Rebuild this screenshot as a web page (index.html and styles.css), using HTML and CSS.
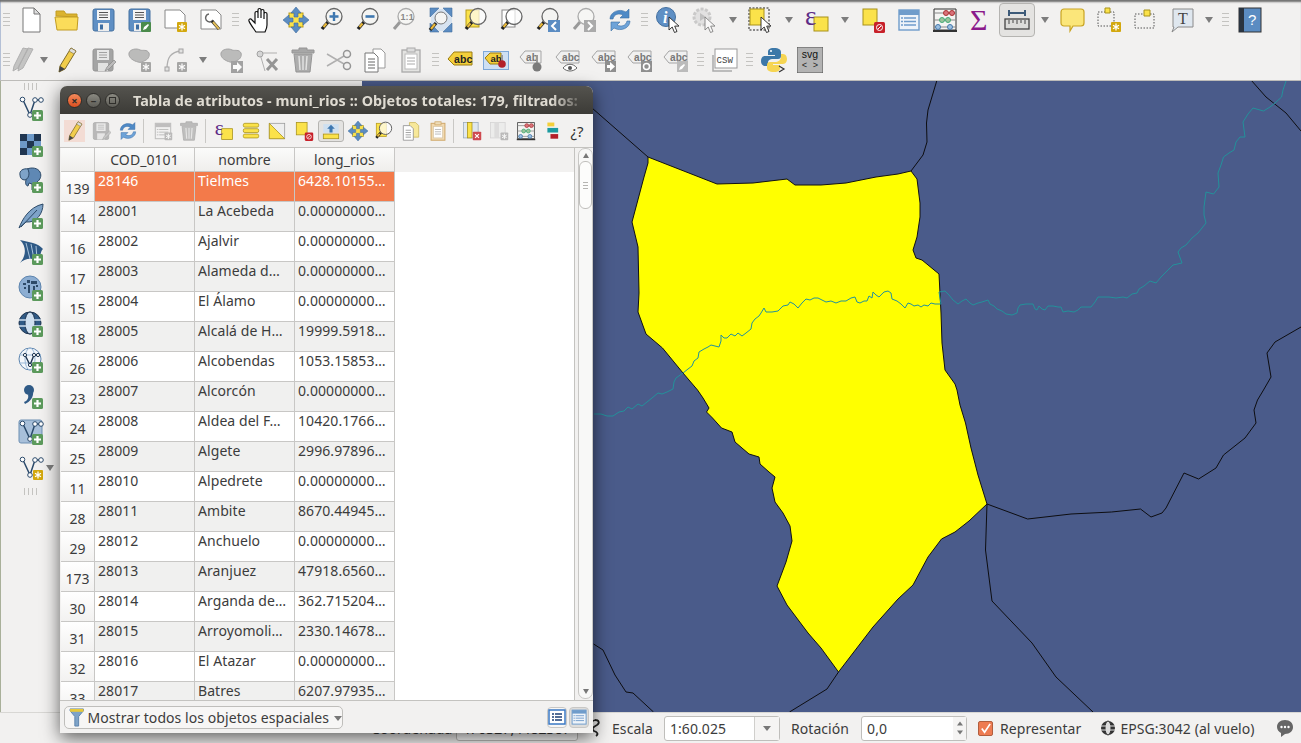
FILE: index.html
```html
<!DOCTYPE html>
<html lang="es">
<head>
    <meta charset="UTF-8">
    <title>QGIS - Tabla de atributos</title>
    <link rel="stylesheet" href="styles.css">
</head>
<body>
<svg class="sprite" xmlns="http://www.w3.org/2000/svg">
    <defs>
        <!-- piezas -->
        <g id="glass"><path d="M9 15L3 22" stroke="#222" stroke-width="3.4"/><path d="M7.500 16.500L4.500 20" stroke="#e9b93a" stroke-width="2.2"/><circle cx="15" cy="9.500" r="8" fill="#f4f4f2" stroke="#666" stroke-width="1.300"/></g>
        <g id="glass-off"><path d="M9 15L3 22" stroke="#999" stroke-width="3"/><circle cx="15" cy="9.500" r="8" fill="#f6f6f4" stroke="#aaa" stroke-width="1.300"/></g>
        <g id="plus"><rect x="14" y="15" width="11" height="11" rx="1.500" fill="#5c9a5c"/><path d="M19.500 17v7M16 20.500h7" stroke="#fff" stroke-width="2.200"/></g>
        <g id="star"><rect x="15" y="15" width="10" height="10" rx="1" fill="#d3a80e"/><path d="M20 16.500v7M17 18.200l6 3.600M23 18.200l-6 3.600" stroke="#fff" stroke-width="1.300"/></g>
        <g id="star-off"><rect x="15" y="15" width="10" height="10" rx="1" fill="#8d8d8d"/><path d="M20 16.500v7M17 18.200l6 3.600M23 18.200l-6 3.600" stroke="#fff" stroke-width="1.300"/></g>
        <g id="cursor"><path d="M0 0v13l3.200-3 2.300 5.500 2.500-1-2.300-5.400H10z" fill="#fff" stroke="#222" stroke-width=".9"/></g>
        <g id="vee"><path d="M5 5l7 15 5-15h5" fill="none" stroke="#2b4a6b" stroke-width="1.500"/><circle cx="4.500" cy="4.500" r="2.300" fill="#fff" stroke="#2b4a6b"/><circle cx="12" cy="20" r="2.300" fill="#fff" stroke="#2b4a6b"/><circle cx="17" cy="5" r="2.300" fill="#fff" stroke="#2b4a6b"/><circle cx="23" cy="5" r="2.300" fill="#fff" stroke="#2b4a6b"/></g>
        <g id="globe"><circle cx="12" cy="12" r="11" fill="#8daed2" stroke="#5d84ad"/></g>
        <g id="floppy"><rect x="3" y="2" width="21" height="22" rx="2" fill="#5f8fc4" stroke="#44709f"/><rect x="7" y="3" width="13" height="10" fill="#f4f4f4"/><path d="M9 5.500h9M9 8h9M9 10.500h9" stroke="#555"/><rect x="8" y="16" width="11" height="8" fill="#eee"/><rect x="10" y="17.500" width="3" height="5" fill="#3d6da3"/></g>
        <g id="floppy-grey"><rect x="3" y="2" width="20" height="22" rx="2" fill="#8b8b8b" stroke="#777"/><rect x="7" y="3" width="12" height="10" fill="#e4e4e4"/><path d="M9 5.500h8M9 8h8M9 10.500h8" stroke="#888"/><rect x="8" y="16" width="10" height="8" fill="#ddd"/><path d="M15 24l2-4 7-7 2 2-7 7z" fill="#aaa" stroke="#666" stroke-width=".7"/></g>
        <g id="blob"><path d="M3 6c1-4 8-5 11-3 3 1 7-1 9 3 1 3-1 6-3 7-4 2-5 3-8 2-4-1-10-4-9-9z" fill="#a9a9a9" stroke="#8a8a8a"/></g>
        <g id="tag-yellow"><path d="M1 12l6-7h18v13H7z" fill="#f3cf3a" stroke="#9b7d12"/><text x="7" y="16" class="ic-text" font-size="10.500" fill="#222" font-weight="700">abc</text></g>
        <g id="tag-grey"><path d="M1 10l5-6h18v12H6z" fill="#f0f0f0" stroke="#a5a5a5"/><text x="7" y="14" class="ic-text" font-size="10" fill="#777" font-weight="700">abc</text></g>
        <g id="tag-ab"><path d="M1 10l5-6h16v12H6z" fill="#f0f0f0" stroke="#a5a5a5"/><text x="7" y="14" class="ic-text" font-size="10" fill="#777" font-weight="700">ab</text></g>

        <!-- barra superior -->
        <g id="new"><path d="M5 1h11l6 6v18H5z" fill="#fff" stroke="#777"/><path d="M16 1v6h6z" fill="#ddd" stroke="#777"/></g>
        <g id="open"><path d="M2 9V4h8l2 3h11v3z" fill="#dbb32f" stroke="#c29c22"/><path d="M1 10h23l-1 13H3z" fill="#fbdc5a" stroke="#c29c22"/></g>
        <g id="save"><use href="#floppy"/></g>
        <g id="saveas"><use href="#floppy"/><rect x="15" y="15" width="10" height="10" rx="1" fill="#4b8b4b"/><path d="M17 23l1-3 4-3 1 1-3 4z" fill="#fff"/></g>
        <g id="newlayout"><path d="M3 3h15l5 5v13H3z" fill="#fff" stroke="#888"/><use href="#star"/></g>
        <g id="mgr"><path d="M3 3h15l5 5v14H3z" fill="#fff" stroke="#888"/><path d="M11 7a4 4 0 1 0 4 6" fill="none" stroke="#666" stroke-width="1.500"/><path d="M14 14l7 8" stroke="#222" stroke-width="3"/><path d="M15 15l6 7" stroke="#e2bd59" stroke-width="2"/></g>
        <g id="pan"><path d="M9 25c-2-3-6-8-7-11-.500-2 1.500-3 3-1l3 3V6c0-2 3-2 3 0v5V3c0-2 3-2 3 0v8V4c0-2 3-2 3 0v8-5c0-2 3-2 3 0v11c0 3-1 5-2 7z" fill="#fff" stroke="#111" stroke-width="1.200"/></g>
        <g id="pansel"><rect x="6" y="6" width="14" height="14" fill="#fbe24a" stroke="#b79b1a"/><path d="M13 0l5 6h-3v4h-4V6H8zM13 26l5-6h-3v-4h-4v4H8zM0 13l6-5v3h4v4H6v3zM26 13l-6-5v3h-4v4h4v3z" fill="#5b8cc2" stroke="#3f6c9e" stroke-width=".6"/></g>
        <g id="zoomin"><use href="#glass"/><path d="M15 5v9M10.500 9.500h9" stroke="#3f78b0" stroke-width="2.400"/></g>
        <g id="zoomout"><use href="#glass"/><path d="M10.500 9.500h9" stroke="#3f78b0" stroke-width="2.600"/></g>
        <g id="zoom11"><use href="#glass-off"/><text x="9.500" y="13" class="ic-text" font-size="9" font-weight="700" fill="#888">1:1</text></g>
        <g id="full"><rect x="4" y="2" width="21" height="22" fill="#d7e3f0"/><path d="M3 1h9L3 10zM25 1h-9l9 9zM3 25h9l-9-9zM25 25h-9l9-9z" fill="#5b8cc2" stroke="#44709f" stroke-width=".6"/><path d="M9 16L3 23" stroke="#222" stroke-width="3.400"/><path d="M8 17l-4 5" stroke="#e9b93a" stroke-width="2.200"/><circle cx="14" cy="11" r="6" fill="#f4f4f2" stroke="#777"/></g>
        <g id="zoomsel"><rect x="3" y="3" width="13" height="17" fill="#fbe24a" stroke="#b79b1a"/><path d="M9 15L3 22" stroke="#222" stroke-width="3.400"/><path d="M7.500 16.500L4.500 20" stroke="#e9b93a" stroke-width="2.200"/><circle cx="15" cy="9.500" r="8" fill="#fff" fill-opacity=".7" stroke="#666" stroke-width="1.300"/></g>
        <g id="zoomlayer"><rect x="3" y="3" width="13" height="17" fill="#fff" stroke="#888"/><path d="M9 15L3 22" stroke="#222" stroke-width="3.400"/><path d="M7.500 16.500L4.500 20" stroke="#e9b93a" stroke-width="2.200"/><circle cx="15" cy="9.500" r="8" fill="#fff" fill-opacity=".7" stroke="#666" stroke-width="1.300"/></g>
        <g id="zoomlast"><use href="#glass"/><rect x="13" y="13" width="12" height="12" fill="#5b8cc2"/><path d="M21 15l-4 4 4 4" fill="none" stroke="#fff" stroke-width="2"/></g>
        <g id="zoomnext"><use href="#glass-off"/><rect x="13" y="13" width="12" height="12" fill="#aaa"/><path d="M17 15l4 4-4 4" fill="none" stroke="#fff" stroke-width="2"/></g>
        <g id="refresh"><path d="M3 12C3 5 12 1 19 5l3-3v9h-9l3-3c-4-2-9-1-10 4z" fill="#4f8ac6" stroke="#3a6ea5" stroke-width=".6"/><path d="M23 14c0 7-9 11-16 7l-3 3v-9h9l-3 3c4 2 9 1 10-4z" fill="#6ea3d8" stroke="#3a6ea5" stroke-width=".6"/></g>
        <g id="identify"><circle cx="10" cy="10" r="9.500" fill="#5f8fc4" stroke="#44709f"/><text x="7" y="16" class="ic-serif" font-size="16" font-weight="700" font-style="italic" fill="#fff">i</text><use href="#cursor" x="13" y="10"/></g>
        <g id="action"><circle cx="10" cy="10" r="8" fill="#d5d5d5" stroke="#aaa" stroke-width="3" stroke-dasharray="3 1.500"/><path d="M8 6l6 4-6 4z" fill="#999"/><use href="#cursor" x="13" y="10"/></g>
        <g id="select"><rect x="1" y="1" width="20" height="22" fill="none" stroke="#222" stroke-dasharray="2 1.500"/><rect x="2" y="2" width="14" height="16" fill="#fbe24a" stroke="#a8921a"/><use href="#cursor" x="13" y="10"/></g>
        <g id="expr"><rect x="10" y="10" width="14" height="14" fill="#fbe24a" stroke="#a8921a"/><text x="1" y="18" class="ic-serif" font-size="27" fill="#5d2c86">&#949;</text></g>
        <g id="deselect"><rect x="3" y="2" width="14" height="16" fill="#fbe24a" stroke="#a8921a"/><rect x="14" y="15" width="11" height="11" rx="1.500" fill="#c8212a"/><circle cx="19.500" cy="20.500" r="3" fill="none" stroke="#fff"/><path d="M18 22l3-3" stroke="#fff"/></g>
        <g id="table"><rect x="3" y="3" width="20" height="20" fill="#eef3f9" stroke="#6f9ccb" stroke-width="1.400"/><rect x="3" y="3" width="20" height="5" fill="#6f9ccb"/><path d="M8 11h12M8 14.500h12M8 18h12M5 11h2M5 14.500h2M5 18h2" stroke="#6f9ccb" stroke-width="1.300"/></g>
        <g id="abacus"><path d="M2 2h22v21H2z" fill="#f4f4f2" stroke="#333"/><path d="M1 24h24" stroke="#333" stroke-width="2"/><path d="M2 6h22M2 13h22M2 20h22" stroke="#888"/><circle cx="14" cy="6" r="2.500" fill="#d9727a" stroke="#a33"/><circle cx="20" cy="6" r="2.500" fill="#d9727a" stroke="#a33"/><circle cx="10" cy="13" r="2.500" fill="#9ac49a" stroke="#4a7"/><circle cx="16" cy="13" r="2.500" fill="#9ac49a" stroke="#4a7"/><circle cx="6" cy="20" r="2.500" fill="#9cc0e2" stroke="#47a"/><circle cx="18" cy="20" r="2.500" fill="#9cc0e2" stroke="#47a"/></g>
        <g id="sigma"><text x="2" y="23" class="ic-serif" font-size="30" fill="#8b1a8b">&#931;</text></g>
        <g id="ruler"><path d="M5 3v6M21 3v6M5 6h16" stroke="#3d5a78" stroke-width="2"/><rect x="1" y="12" width="24" height="10" fill="#dcdcda" stroke="#444" stroke-width="1.300"/><path d="M5 13v4M9 13v3M13 13v4M17 13v3M21 13v4" stroke="#444"/></g>
        <g id="comment"><path d="M4 2h17a3 3 0 0 1 3 3v11a3 3 0 0 1-3 3H13l-3 5v-5H4a3 3 0 0 1-3-3V5a3 3 0 0 1 3-3z" fill="#fbe67a" stroke="#c9a422" stroke-width="1.200"/></g>
        <g id="ann"><rect x="2" y="5" width="16" height="14" fill="none" stroke="#555" stroke-dasharray="1.500 1.500"/><path d="M9 1h5v5H9z" fill="#fbe24a" stroke="#a8921a"/><use href="#star"/></g>
        <g id="ann2"><rect x="3" y="7" width="19" height="14" fill="none" stroke="#555" stroke-dasharray="1.500 1.500"/><path d="M12 3h6v6h-6z" fill="#fbe24a" stroke="#a8921a"/></g>
        <g id="text"><path d="M5 2h20v18H10l-6 5 2-5H5z" fill="#dfe7ef" stroke="#8a8a8a"/><text x="10" y="17" class="ic-serif" font-size="16" fill="#444">T</text></g>
        <g id="help"><rect x="2" y="1" width="22" height="24" fill="#5b8cc2" stroke="#333"/><rect x="2" y="1" width="5" height="24" fill="#2a3440"/><text x="11" y="18" class="ic-text" font-size="15" fill="#fff">?</text></g>
        <g id="digitize"><path d="M2 24l5-3 10-19-5-1L3 19zM7 24l5-3 10-19-5-1L8 19z" fill="#b5b5b5" stroke="#999"/></g>
        <g id="pencil"><path d="M5 25l1-6L17 1l5 3-11 18z" fill="#f1cd4b" stroke="#7d6a2a"/><path d="M5 25l1-6 5 3z" fill="#444"/><path d="M17 1l5 3-2 3-5-3z" fill="#ddd" stroke="#7d6a2a" stroke-width=".6"/></g>
        <g id="savedit"><use href="#floppy-grey"/></g>
        <g id="addfeat"><use href="#blob"/><use href="#star-off"/></g>
        <g id="node"><path d="M5 22C5 10 9 5 19 4" fill="none" stroke="#9a9a9a" stroke-width="1.300"/><rect x="3" y="20" width="4" height="4" fill="#ddd" stroke="#888"/><rect x="17" y="2" width="4" height="4" fill="#ddd" stroke="#888"/><use href="#star-off"/></g>
        <g id="moveblob"><use href="#blob"/><rect x="13" y="14" width="12" height="12" fill="#888"/><path d="M15 18h4v-3l5 5-5 5v-3h-4z" fill="#fff"/></g>
        <g id="nodetool"><path d="M6 7l5 17M7 6h16" stroke="#999" fill="none"/><circle cx="6" cy="7" r="3" fill="#ccc" stroke="#888"/><path d="M13 12l10 11M23 12L13 23" stroke="#777" stroke-width="3"/></g>
        <g id="trash"><path d="M9 3V1h8v2h7v3H2V3z" fill="#8f8f8f" stroke="#777"/><path d="M4 7h18l-2 18H6z" fill="#979797" stroke="#777"/><path d="M9 9l1 14M13 9v14M17 9l-1 14" stroke="#ddd" stroke-width="1.500"/></g>
        <g id="scissors"><path d="M1 7l17 10M1 19l17-10" stroke="#9a9a9a" stroke-width="1.500"/><circle cx="21" cy="7" r="3.500" fill="none" stroke="#777" stroke-width="1.500"/><circle cx="21" cy="19" r="3.500" fill="none" stroke="#777" stroke-width="1.500"/></g>
        <g id="copy"><path d="M11 2h8l4 4v15H11z" fill="#fff" stroke="#999"/><path d="M3 6h9l4 4v15H3z" fill="#fff" stroke="#777"/><path d="M6 12h7M6 15h7M6 18h7M6 21h7" stroke="#666"/></g>
        <g id="copy-tint"><path d="M11 2h8l4 4v15H11z" fill="#f7e89a" stroke="#c9b65a"/><path d="M3 6h9l4 4v15H3z" fill="#fff" stroke="#888"/><path d="M6 12h7M6 15h7M6 18h7M6 21h7" stroke="#888"/></g>
        <g id="paste"><rect x="4" y="3" width="18" height="22" fill="#e4e4e2" stroke="#aaa" stroke-width="1.300"/><rect x="7" y="7" width="12" height="15" fill="#fff" stroke="#bbb"/><rect x="9" y="1" width="8" height="4" fill="#ddd" stroke="#aaa"/><path d="M9 11h8M9 14h8M9 17h8" stroke="#aaa"/></g>
        <g id="paste-tint"><rect x="4" y="3" width="18" height="22" fill="#f1d9b0" stroke="#cfa86a" stroke-width="1.300"/><rect x="7" y="7" width="12" height="15" fill="#fff" stroke="#d8c8a8"/><rect x="9" y="1" width="8" height="4" fill="#eedcb8" stroke="#cfa86a"/><path d="M9 11h8M9 14h8M9 17h8" stroke="#aaa"/></g>
        <g id="label"><use href="#tag-yellow"/></g>
        <g id="labelpin"><rect x=".5" y="4.500" width="25" height="18" fill="#cfe0f3" stroke="#7ea8d8"/><path d="M2 11l5-5h11v11H7z" fill="#f3cf3a" stroke="#9b7d12"/><text x="7.500" y="15" class="ic-text" font-size="9.500" fill="#222" font-weight="700">ab</text><rect x="18" y="8" width="2" height="6" fill="#999"/><circle cx="19" cy="17" r="3.800" fill="#b3202a"/></g>
        <g id="labelgrey"><use href="#tag-ab"/><rect x="17" y="8" width="2" height="8" fill="#999"/><circle cx="18" cy="20" r="4.500" fill="#7b7b7b"/></g>
        <g id="labeleye"><use href="#tag-grey"/><path d="M8 21c4-5 10-5 14 0-4 4-10 4-14 0z" fill="#fff" stroke="#666"/><circle cx="15" cy="21" r="2" fill="#555"/></g>
        <g id="labelmove"><use href="#tag-grey"/><rect x="14" y="14" width="11" height="11" fill="#8f8f8f"/><path d="M16 18h3v-3l5 4.500-5 4.500v-3h-3z" fill="#fff"/></g>
        <g id="labelrot"><use href="#tag-grey"/><rect x="14" y="14" width="11" height="11" fill="#8f8f8f"/><circle cx="19.500" cy="19.500" r="3" fill="none" stroke="#fff" stroke-width="1.500"/></g>
        <g id="labeledit"><use href="#tag-grey"/><rect x="14" y="14" width="11" height="11" fill="#bbb"/><path d="M16 23l1-3 4-3 1 1-3 4z" fill="#fff"/></g>
        <g id="csw"><path d="M1 8v16h19" fill="none" stroke="#aaa" stroke-width="1.500"/><rect x="3" y="2" width="22" height="19" fill="#fff" stroke="#999"/><text x="4.500" y="15.500" class="ic-mono" font-size="9" fill="#444">CSW</text></g>
        <g id="python"><path d="M13 1c-5 0-6 2-6 4v3h7v1H4c-3 0-4 3-4 5s1 5 4 5h3v-3c0-3 2-4 5-4h5c2 0 3-1 3-3V5c0-2-2-4-7-4z" fill="#3d78a8"/><path d="M13 25c5 0 6-2 6-4v-3h-7v-1h10c3 0 4-3 4-5s-1-5-4-5h-2v3c0 3-3 5-6 5H9c-2 0-3 1-3 3v3c0 2 2 4 7 4z" fill="#f6d552"/><circle cx="10" cy="4" r="1" fill="#fff"/><path d="M18 19l5 3-5 3" fill="none" stroke="#333" stroke-width="1.200"/></g>
        <g id="svgbox"><rect x="0" y="0" width="26" height="26" fill="#b3b3b3" stroke="#555"/><text x="13" y="11" text-anchor="middle" class="ic-text" font-size="10.500" fill="#111">svg</text><text x="13" y="21" text-anchor="middle" class="ic-mono" font-size="9" fill="#222">&lt; &gt;</text></g>

        <!-- barra izquierda -->
        <g id="addvec"><use href="#vee"/><use href="#plus"/></g>
        <g id="addras"><path d="M2 3h7v7H2zM16 3h7v7h-7zM9 10h7v7H9zM2 17h7v7H2z" fill="#1f3550"/><path d="M9 3h7v7H9zM2 10h7v7H2zM16 10h7v7h-7zM9 17h7v7H9z" fill="#6d99c8"/><use href="#plus"/></g>
        <g id="addpg"><path d="M9 2c5-2 11-1 13 3 2 4 0 8-3 10l-1 8h-4v-6l-3-1-1 3c-2 0-3-3-2-6l1-3z" fill="#5f88b4" stroke="#2d4a68"/><path d="M10 2C5 1 1 4 2 8c0 3 2 5 5 5 3-1 4-4 4-7z" fill="#7ea3c8" stroke="#2d4a68"/><use href="#plus"/></g>
        <g id="addsl"><path d="M1 25C4 17 11 4 25 1c0 9-6 19-17 18z" fill="#7ea3c8" stroke="#2d4a68"/><path d="M3 24L19 7" stroke="#2d4a68"/><use href="#plus"/></g>
        <g id="addms"><path d="M2 1c9 2 18 3 23 9-2 1-3 7-3 12-9-4-16-2-20 2 6-7 7-16 0-23z" fill="#2f5a86"/><path d="M8 4l4 16M13 5l3 15M18 7l1 13" stroke="#a9c4dd"/><use href="#plus"/></g>
        <g id="addwms"><use href="#globe"/><path d="M5 8h3v2H5zM9 5h3v3H9zM13 6h6v3h-6zM10 10h2v8h-2zM15 11h2v5h-2zM18 10h2v2h-2zM6 12h2v2H6z" fill="#2d4a68"/><use href="#plus"/></g>
        <g id="addwcs"><circle cx="12" cy="12" r="11" fill="#2f5a86" stroke="#1f3550"/><ellipse cx="12" cy="12" rx="5" ry="11" fill="#cfe0f0" stroke="#1f3550"/><path d="M1 9h22M1 15h22" stroke="#cfe0f0" stroke-width="1.500"/><use href="#plus"/></g>
        <g id="addwfs"><circle cx="12" cy="12" r="11" fill="#f4f7fb" stroke="#5d84ad"/><path d="M1 8h22M1 16h22" stroke="#9bb9d8"/><ellipse cx="12" cy="12" rx="5" ry="11" fill="none" stroke="#9bb9d8"/><path d="M7 8l5 10 4-10h4" fill="none" stroke="#1f3550" stroke-width="1.400"/><circle cx="7" cy="8" r="1.600" fill="#fff" stroke="#1f3550"/><circle cx="12" cy="18" r="1.600" fill="#fff" stroke="#1f3550"/><circle cx="16" cy="8" r="1.600" fill="#fff" stroke="#1f3550"/><circle cx="20" cy="8" r="1.600" fill="#fff" stroke="#1f3550"/><use href="#plus"/></g>
        <g id="addcsv"><circle cx="11" cy="7" r="5" fill="#2f5a86"/><path d="M15 8c1 6-3 11-8 13l-1-2c3-1 5-4 4-7z" fill="#2f5a86"/><use href="#plus"/></g>
        <g id="addvirt"><rect x="1" y="1" width="23" height="23" rx="2" fill="#a8c0da" stroke="#6d8fb2"/><use href="#vee"/><use href="#plus"/></g>
        <g id="newshp"><use href="#vee"/><use href="#star"/></g>

        <!-- barra de la ventana -->
        <g id="selall"><rect x="3" y="3" width="20" height="5" rx="2" fill="#fbe24a" stroke="#a8921a"/><rect x="3" y="10" width="20" height="5" rx="2" fill="#fbe24a" stroke="#a8921a"/><rect x="3" y="17" width="20" height="5" rx="2" fill="#fbe24a" stroke="#a8921a"/></g>
        <g id="invert"><rect x="3" y="3" width="20" height="20" fill="#eee" stroke="#999"/><path d="M3 3l20 20H3z" fill="#fbe24a" stroke="#a8921a"/></g>
        <g id="movetop"><rect x="3" y="17" width="20" height="6" fill="#fbe24a" stroke="#a8921a"/><path d="M3 4h20v11H3z" fill="#cfe0f0"/><path d="M13 5l5 5h-3v5h-4v-5H8z" fill="#3f78b0"/></g>
        <g id="delcol"><rect x="2" y="2" width="19" height="20" fill="#dfe7ef" stroke="#9ab"/><rect x="7" y="2" width="6" height="20" fill="#fbe24a" stroke="#a8921a"/><rect x="14" y="14" width="11" height="11" rx="1" fill="#cf4a50"/><path d="M17 17l5 5M22 17l-5 5" stroke="#fff" stroke-width="1.500"/></g>
        <g id="addcol"><rect x="2" y="2" width="19" height="20" fill="#e8e8e8" stroke="#bbb"/><rect x="7" y="2" width="6" height="20" fill="#ccc"/><use href="#star-off"/></g>
        <g id="cond"><path d="M7 2h9v5H7z" fill="#f3cf3a"/><path d="M7 9h14v6H7z" fill="#1b9aa0"/><path d="M11 17h10v6H11z" fill="#b3202a"/></g>
    </defs>
</svg>

<div class="app">
    <header class="topbar">
        <div class="toolrow">
            <span class="grip"></span>
            <button class="tool"><svg viewBox="0 0 26 26"><use href="#new"/></svg></button>
            <button class="tool"><svg viewBox="0 0 26 26"><use href="#open"/></svg></button>
            <button class="tool"><svg viewBox="0 0 26 26"><use href="#save"/></svg></button>
            <button class="tool"><svg viewBox="0 0 26 26"><use href="#saveas"/></svg></button>
            <button class="tool"><svg viewBox="0 0 26 26"><use href="#newlayout"/></svg></button>
            <button class="tool"><svg viewBox="0 0 26 26"><use href="#mgr"/></svg></button>
            <span class="grip"></span>
            <button class="tool"><svg viewBox="0 0 26 26"><use href="#pan"/></svg></button>
            <button class="tool"><svg viewBox="0 0 26 26"><use href="#pansel"/></svg></button>
            <button class="tool"><svg viewBox="0 0 26 26"><use href="#zoomin"/></svg></button>
            <button class="tool"><svg viewBox="0 0 26 26"><use href="#zoomout"/></svg></button>
            <button class="tool"><svg viewBox="0 0 26 26"><use href="#zoom11"/></svg></button>
            <button class="tool"><svg viewBox="0 0 26 26"><use href="#full"/></svg></button>
            <button class="tool"><svg viewBox="0 0 26 26"><use href="#zoomsel"/></svg></button>
            <button class="tool"><svg viewBox="0 0 26 26"><use href="#zoomlayer"/></svg></button>
            <button class="tool"><svg viewBox="0 0 26 26"><use href="#zoomlast"/></svg></button>
            <button class="tool"><svg viewBox="0 0 26 26"><use href="#zoomnext"/></svg></button>
            <button class="tool"><svg viewBox="0 0 26 26"><use href="#refresh"/></svg></button>
            <span class="grip"></span>
            <button class="tool"><svg viewBox="0 0 26 26"><use href="#identify"/></svg></button>
            <button class="tool off"><svg viewBox="0 0 26 26"><use href="#action"/></svg></button>
            <span class="drop"></span>
            <button class="tool"><svg viewBox="0 0 26 26"><use href="#select"/></svg></button>
            <span class="drop"></span>
            <button class="tool"><svg viewBox="0 0 26 26"><use href="#expr"/></svg></button>
            <span class="drop"></span>
            <button class="tool"><svg viewBox="0 0 26 26"><use href="#deselect"/></svg></button>
            <button class="tool"><svg viewBox="0 0 26 26"><use href="#table"/></svg></button>
            <button class="tool"><svg viewBox="0 0 26 26"><use href="#abacus"/></svg></button>
            <button class="tool"><svg viewBox="0 0 26 26"><use href="#sigma"/></svg></button>
            <button class="tool active"><svg viewBox="0 0 26 26"><use href="#ruler"/></svg></button>
            <span class="drop"></span>
            <button class="tool"><svg viewBox="0 0 26 26"><use href="#comment"/></svg></button>
            <button class="tool"><svg viewBox="0 0 26 26"><use href="#ann"/></svg></button>
            <button class="tool"><svg viewBox="0 0 26 26"><use href="#ann2"/></svg></button>
            <button class="tool"><svg viewBox="0 0 26 26"><use href="#text"/></svg></button>
            <span class="drop"></span>
            <span class="grip"></span>
            <button class="tool"><svg viewBox="0 0 26 26"><use href="#help"/></svg></button>
        </div>
        <div class="toolrow">
            <span class="grip"></span>
            <button class="tool tool-short faded"><svg viewBox="0 0 26 26"><use href="#digitize"/></svg></button>
            <span class="drop drop-short"></span>
            <button class="tool"><svg viewBox="0 0 26 26"><use href="#pencil"/></svg></button>
            <button class="tool faded"><svg viewBox="0 0 26 26"><use href="#savedit"/></svg></button>
            <button class="tool faded"><svg viewBox="0 0 26 26"><use href="#addfeat"/></svg></button>
            <button class="tool faded"><svg viewBox="0 0 26 26"><use href="#node"/></svg></button>
            <span class="drop"></span>
            <button class="tool faded"><svg viewBox="0 0 26 26"><use href="#moveblob"/></svg></button>
            <button class="tool faded"><svg viewBox="0 0 26 26"><use href="#nodetool"/></svg></button>
            <button class="tool faded"><svg viewBox="0 0 26 26"><use href="#trash"/></svg></button>
            <button class="tool faded"><svg viewBox="0 0 26 26"><use href="#scissors"/></svg></button>
            <button class="tool"><svg viewBox="0 0 26 26"><use href="#copy"/></svg></button>
            <button class="tool"><svg viewBox="0 0 26 26"><use href="#paste"/></svg></button>
            <span class="grip"></span>
            <button class="tool"><svg viewBox="0 0 26 26"><use href="#label"/></svg></button>
            <button class="tool"><svg viewBox="0 0 26 26"><use href="#labelpin"/></svg></button>
            <button class="tool"><svg viewBox="0 0 26 26"><use href="#labelgrey"/></svg></button>
            <button class="tool"><svg viewBox="0 0 26 26"><use href="#labeleye"/></svg></button>
            <button class="tool"><svg viewBox="0 0 26 26"><use href="#labelmove"/></svg></button>
            <button class="tool"><svg viewBox="0 0 26 26"><use href="#labelrot"/></svg></button>
            <button class="tool"><svg viewBox="0 0 26 26"><use href="#labeledit"/></svg></button>
            <span class="grip"></span>
            <button class="tool"><svg viewBox="0 0 26 26"><use href="#csw"/></svg></button>
            <span class="grip"></span>
            <button class="tool"><svg viewBox="0 0 26 26"><use href="#python"/></svg></button>
            <button class="tool"><svg viewBox="0 0 26 26"><use href="#svgbox"/></svg></button>
        </div>
    </header>

    <main class="workspace">
        <aside class="sidebar">
            <span class="grip-h"></span>
            <button class="tool"><svg viewBox="0 0 26 26"><use href="#addvec"/></svg></button>
            <button class="tool"><svg viewBox="0 0 26 26"><use href="#addras"/></svg></button>
            <button class="tool"><svg viewBox="0 0 26 26"><use href="#addpg"/></svg></button>
            <button class="tool"><svg viewBox="0 0 26 26"><use href="#addsl"/></svg></button>
            <button class="tool"><svg viewBox="0 0 26 26"><use href="#addms"/></svg></button>
            <button class="tool"><svg viewBox="0 0 26 26"><use href="#addwms"/></svg></button>
            <button class="tool"><svg viewBox="0 0 26 26"><use href="#addwcs"/></svg></button>
            <button class="tool"><svg viewBox="0 0 26 26"><use href="#addwfs"/></svg></button>
            <button class="tool"><svg viewBox="0 0 26 26"><use href="#addcsv"/></svg></button>
            <button class="tool"><svg viewBox="0 0 26 26"><use href="#addvirt"/></svg></button>
            <div class="sidebar-last">
                <button class="tool"><svg viewBox="0 0 26 26"><use href="#newshp"/></svg></button>
                <span class="drop drop-side"></span>
            </div>
            <span class="grip-h"></span>
        </aside>
        <div class="layers-panel"></div>
        <svg class="map" viewBox="362 81 939 631" xmlns="http://www.w3.org/2000/svg">
            <polygon class="muni-sel" points="648,157 717,184 753,183 787,179 795,185 821,185 846,183 876,177 898,174 911,171 917,179 920,203 920,217 917,237 913,250 916,258 922,260 939,274 941,313 942,343 945,370 955,384 957,390 960,405 965.500,423 971,448 978,475 987,504 969,521 955,532 941.500,539 928,557 913,585 898,599 873,627 838.500,672 821,648 808,633 787,605 777,586 786,562 792,541 790,526 783,513 775,502 772,488 775,477 769,472 760,464 759,457 749,454 735,442 732,432 721.500,428 712.500,418 706.500,412 709,408 703,398 697.500,390 683,373 662.500,348 646,334 638,312 639,293 638,247 632,222 644,177 648,163"/>
            <path class="muni" d="M592 108L648 157"/>
            <path class="muni" d="M937 80L928 110 926.500 123 927 142 923 155 911 171"/>
            <path class="muni" d="M1251 80L1266 97 1286 113 1301 131"/>
            <path class="muni" d="M1301 327L1275 342 1267 353 1271 377 1263.500 390 1257.500 400 1254 410 1256 423 1245 438 1223.500 455 1216 468 1198.600 479 1184 473 1166 508 1162 513 1151 517 1140.500 509 1111.500 512 1071 514 1027.600 519 987 504"/>
            <path class="muni" d="M987 504L985.500 550 992 601 1032 643 1056 677 1093 712"/>
            <path class="muni" d="M838.500 672L827 689 789.500 712"/>
            <path class="muni" d="M593.600 644L603 650 615 675 626 692 633 693 653.500 712"/>
            <path class="river" d="M594 414L601 414 607 416 613 416 619 412 624 411 628 407 632 409 638 404 642 406 647 402 652 398 658 393 662 394 667 392 673 389 674 382 676 378 683 373 688 369 692 366 694 361 698 358 699 352 704 349 708 347 711 345 719 347 721 341 721 335 724 338 727 338 731 334 735 336 738 333 742 336 746 333 751 329 752 323 755 319 759 316 761 313 764 308 766 312 772 312 778 311 783 306 788 305 790 302 794 304 798 308 802 303 806 299 810 300 814 298 818 298 822 300 826 302 831 301 836 303 841 301 846 301 851 298 855 297 857 302 860 303 864 301 867 301 869 296 872 298 873 292 876 295 879 297 884 292 888 291 891 293 892 299 897 301 901 304 905 308 908 303 911 304 914 306 918 305 921 307 924 305 928 306 931 303 935 304 941 304 939 292 945 291 949 295 953 300 958 304 962 301 966 299 970 303 973 305 978 303 982 302 988 300 990 304 994 306 997 309 1002 311 1006 314 1012 315 1017 313 1018 308 1020 305 1026 304 1033 304 1035 309 1037 310 1039 306 1042 309 1045 310 1048 306 1053 306 1058 307 1061 307 1063 312 1068 311 1074 312 1078 310 1081 307 1086 307 1091 307 1095 302 1098 297 1104 297 1109 297 1116 298 1123 297 1127 298 1132 294 1137 293 1139 289 1144 286 1150 281 1156 283 1161 277 1168 270 1173 265 1182 263 1178 252 1181 248 1186 245 1192 238 1198 233 1206 223 1204 215 1204 207 1206 192 1213.600 194 1219 187 1218 173 1221 165 1223.500 157 1229 153 1234 150 1236 142 1240 137 1245 137 1243 122 1248 114 1253 108 1263.500 111 1270 107 1275 103 1281.600 97 1283 90 1286 81"/>
        </svg>
    </main>

    <footer class="statusbar">
        <span class="st-coord">Coordenada</span>
        <span class="field field-coord">470327,4482387</span>
        <svg class="st-extent" viewBox="0 0 16 20"><path d="M8 2c4 0 5 3 2 5-4 2-6 4-3 6 3 1 5 3 2 5M2 10c0-5 3-7 6-8" fill="none" stroke="#222" stroke-width="1.800"/></svg>
        <span class="st-label">Escala</span>
        <span class="field field-scale">1:60.025<span class="combo-btn"><i class="tri"></i></span></span>
        <span class="st-label">Rotación</span>
        <span class="field field-rot">0,0<span class="spin-btn"><i class="tri tri-up"></i><i class="tri"></i></span></span>
        <label class="st-check"><span class="check"><svg viewBox="0 0 14 14"><path d="M3 7l3 4 6-9" fill="none" stroke="#fff" stroke-width="1.800"/></svg></span>Representar</label>
        <span class="st-crs"><svg viewBox="0 0 16 16"><circle cx="8" cy="8" r="7" fill="#333"/><ellipse cx="8" cy="8" rx="3" ry="7" fill="#ddd" stroke="#333"/><path d="M1 6h14M1 10h14" stroke="#ddd"/></svg>EPSG:3042 (al vuelo)</span>
        <svg class="st-msg" viewBox="0 0 18 18"><path d="M9 1c5 0 8 3 8 7s-3 7-8 7l-4 3v-4c-2-1-4-3-4-6 0-4 3-7 8-7z" fill="#666"/><circle cx="5.500" cy="8" r="1.200" fill="#fff"/><circle cx="9" cy="8" r="1.200" fill="#fff"/><circle cx="12.500" cy="8" r="1.200" fill="#fff"/></svg>
    </footer>
</div>

<section class="window">
    <div class="titlebar">
        <span class="wbtn wbtn-close">&#215;</span>
        <span class="wbtn">&#8211;</span>
        <span class="wbtn"><i class="wbtn-sq"></i></span>
        <span class="wtitle">Tabla de atributos - muni_rios :: Objetos totales: 179, filtrados:</span>
    </div>
    <div class="wtools">
        <button class="wtool wtool-edit"><svg viewBox="0 0 26 26"><use href="#pencil"/></svg></button>
        <button class="wtool off"><svg viewBox="0 0 26 26"><use href="#floppy-grey"/></svg></button>
        <button class="wtool"><svg viewBox="0 0 26 26"><use href="#refresh"/></svg></button>
        <span class="wsep"></span>
        <button class="wtool off"><svg viewBox="0 0 26 26"><use href="#table"/><use href="#star-off"/></svg></button>
        <button class="wtool off"><svg viewBox="0 0 26 26"><use href="#trash"/></svg></button>
        <span class="wsep"></span>
        <button class="wtool"><svg viewBox="0 0 26 26"><use href="#expr"/></svg></button>
        <button class="wtool"><svg viewBox="0 0 26 26"><use href="#selall"/></svg></button>
        <button class="wtool"><svg viewBox="0 0 26 26"><use href="#invert"/></svg></button>
        <button class="wtool"><svg viewBox="0 0 26 26"><use href="#deselect"/></svg></button>
        <button class="wtool wtool-on"><svg viewBox="0 0 26 26"><use href="#movetop"/></svg></button>
        <button class="wtool"><svg viewBox="0 0 26 26"><use href="#pansel"/></svg></button>
        <button class="wtool"><svg viewBox="0 0 26 26"><use href="#zoomsel"/></svg></button>
        <button class="wtool"><svg viewBox="0 0 26 26"><use href="#copy-tint"/></svg></button>
        <button class="wtool"><svg viewBox="0 0 26 26"><use href="#paste-tint"/></svg></button>
        <span class="wsep"></span>
        <button class="wtool"><svg viewBox="0 0 26 26"><use href="#delcol"/></svg></button>
        <button class="wtool off"><svg viewBox="0 0 26 26"><use href="#addcol"/></svg></button>
        <button class="wtool"><svg viewBox="0 0 26 26"><use href="#abacus"/></svg></button>
        <button class="wtool"><svg viewBox="0 0 26 26"><use href="#cond"/></svg></button>
        <button class="wtool wtool-help">¿?</button>
    </div>
    <div class="wbody">
        <div class="table-wrap">
            <table class="attr">
                <thead>
                    <tr><th class="corner"></th><th>COD_0101</th><th>nombre</th><th>long_rios</th><th class="fill"></th></tr>
                </thead>
                <tbody>
                    <tr class="sel"><th>139</th><td>28146</td><td>Tielmes</td><td>6428.10155…</td><td class="fill"></td></tr>
                    <tr class="alt"><th>14</th><td>28001</td><td>La Acebeda</td><td>0.00000000…</td><td class="fill"></td></tr>
                    <tr><th>16</th><td>28002</td><td>Ajalvir</td><td>0.00000000…</td><td class="fill"></td></tr>
                    <tr class="alt"><th>17</th><td>28003</td><td>Alameda d…</td><td>0.00000000…</td><td class="fill"></td></tr>
                    <tr><th>15</th><td>28004</td><td>El Álamo</td><td>0.00000000…</td><td class="fill"></td></tr>
                    <tr class="alt"><th>18</th><td>28005</td><td>Alcalá de H…</td><td>19999.5918…</td><td class="fill"></td></tr>
                    <tr><th>26</th><td>28006</td><td>Alcobendas</td><td>1053.15853…</td><td class="fill"></td></tr>
                    <tr class="alt"><th>23</th><td>28007</td><td>Alcorcón</td><td>0.00000000…</td><td class="fill"></td></tr>
                    <tr><th>24</th><td>28008</td><td>Aldea del F…</td><td>10420.1766…</td><td class="fill"></td></tr>
                    <tr class="alt"><th>25</th><td>28009</td><td>Algete</td><td>2996.97896…</td><td class="fill"></td></tr>
                    <tr><th>11</th><td>28010</td><td>Alpedrete</td><td>0.00000000…</td><td class="fill"></td></tr>
                    <tr class="alt"><th>28</th><td>28011</td><td>Ambite</td><td>8670.44945…</td><td class="fill"></td></tr>
                    <tr><th>29</th><td>28012</td><td>Anchuelo</td><td>0.00000000…</td><td class="fill"></td></tr>
                    <tr class="alt"><th>173</th><td>28013</td><td>Aranjuez</td><td>47918.6560…</td><td class="fill"></td></tr>
                    <tr><th>30</th><td>28014</td><td>Arganda de…</td><td>362.715204…</td><td class="fill"></td></tr>
                    <tr class="alt"><th>31</th><td>28015</td><td>Arroyomoli…</td><td>2330.14678…</td><td class="fill"></td></tr>
                    <tr><th>32</th><td>28016</td><td>El Atazar</td><td>0.00000000…</td><td class="fill"></td></tr>
                    <tr class="alt"><th>33</th><td>28017</td><td>Batres</td><td>6207.97935…</td><td class="fill"></td></tr>
                </tbody>
            </table>
        </div>
        <div class="vscroll">
            <i class="tri tri-up"></i>
            <span class="thumb"><b></b><b></b><b></b></span>
            <span class="track"></span>
            <i class="tri"></i>
        </div>
    </div>
    <div class="wfoot">
        <button class="filter-btn">
            <svg viewBox="0 0 16 20"><path d="M1 1h14v2L10 9v10H6V9L1 3z" fill="#7ea3c8" stroke="#5d84ad"/><path d="M1 1h14v3H1z" fill="#e8c93a"/></svg>
            Mostrar todos los objetos espaciales<i class="tri"></i>
        </button>
        <span class="view-btns">
            <button class="view-btn"><svg viewBox="0 0 18 18"><rect x="1" y="2" width="16" height="14" fill="#fff" stroke="#3a78c4" stroke-width="1.500"/><path d="M4 6h2M4 9h2M4 12h2M7 6h7M7 9h7M7 12h7" stroke="#1c3f75" stroke-width="1.300"/></svg></button>
            <button class="view-btn view-btn-on"><svg viewBox="0 0 18 18"><use href="#table" transform="scale(.7)"/></svg></button>
        </span>
    </div>
</section>
</body>
</html>
```

FILE: styles.css
```css
* {
    box-sizing: border-box;
}
html, body {
    margin: 0;
    height: 100%;
    overflow: hidden;
}
body {
    font-family: "Noto Sans", sans-serif;
    font-size: 14px;
    letter-spacing: .07px;
    color: #3c3c3c;
    background-color: #f2f1f0;
}
button {
    margin: 0;
    padding: 0;
    border: none;
    background: none;
    font: inherit;
    letter-spacing: inherit;
    color: inherit;
}
.sprite {
    display: none;
}
.ic-text {
    font-family: "Liberation Sans", sans-serif;
}
.ic-serif {
    font-family: "Liberation Serif", serif;
}
.ic-mono {
    font-family: "Liberation Mono", monospace;
}
.app {
    height: 743px;
    display: grid;
    grid-template-rows: 81px 1fr 31px;
}

/* barras de arriba */
.topbar {
    background-color: #f2f1f0;
    box-shadow: inset 0 3px 2px -1px #707070, inset 1px 0 0 #b8c4dc;
    border-bottom: 1px solid #bdbcb9;
}
.toolrow {
    height: 40px;
    display: flex;
    align-items: center;
}
.tool {
    flex: none;
    width: 36px;
    height: 34px;
    display: flex;
    align-items: center;
    justify-content: center;
}
.tool svg {
    width: 26px;
    height: 26px;
}
.tool-short {
    width: 29px;
    margin-left: -4px;
}
.off svg {
    filter: grayscale(1);
    opacity: .55;
}
.faded svg {
    opacity: .75;
}
.active {
    background-color: #e4e3e1;
    border: 1px solid #b5b4b1;
    border-radius: 4px;
}
.grip {
    flex: none;
    width: 13px;
    height: 14px;
    background: repeating-linear-gradient(#c4c3c0 0 1px, transparent 1px 4px) center / 7px 14px no-repeat;
}
.drop {
    flex: none;
    width: 20px;
    height: 10px;
    display: flex;
    align-items: center;
    justify-content: center;
}
.drop::before {
    content: "";
    border-left: 4px solid transparent;
    border-right: 4px solid transparent;
    border-top: 6px solid #7d7d7d;
}
.drop-short {
    width: 11px;
}
.tri {
    display: inline-block;
    width: 0;
    height: 0;
    border-left: 4px solid transparent;
    border-right: 4px solid transparent;
    border-top: 5px solid #777;
}
.tri-up {
    border-top: none;
    border-bottom: 5px solid #777;
}

/* cuerpo */
.workspace {
    display: flex;
    min-height: 0;
}
.sidebar {
    flex: none;
    width: 60px;
    padding: 0 0 0 12px;
    border-left: 1px solid #a9b09a;
    display: flex;
    flex-direction: column;
    align-items: flex-start;
}
.sidebar .tool {
    height: 36px;
}
.sidebar-last {
    display: flex;
    align-items: center;
}
.drop-side {
    width: 10px;
    margin-left: -4px;
}
.grip-h {
    width: 14px;
    height: 7px;
    margin: 2px 0 0 11px;
    background: repeating-linear-gradient(to right, #c4c3c0 0 1px, transparent 1px 4px);
    flex: none;
}
.layers-panel {
    flex: none;
    width: 302px;
    background-color: #f2f1f0;
}
.map {
    flex: 1;
    display: block;
    background-color: #4a5b8a;
    min-width: 0;
}
.muni-sel {
    fill: #ffff00;
    stroke: #111;
    stroke-width: 1;
}
.muni {
    fill: none;
    stroke: #0d0d10;
    stroke-width: 1;
}
.river {
    fill: none;
    stroke: #23919b;
    stroke-width: 1;
}

/* barra de estado */
.statusbar {
    display: flex;
    align-items: center;
    padding: 0 0 0 371px;
    background-color: #f2f1f0;
    border-top: 1px solid #d8d7d4;
}
.st-coord {
    width: 85px;
}
.field {
    flex: none;
    height: 25px;
    line-height: 23px;
    padding-left: 5px;
    background-color: #fff;
    border: 1px solid #bfbebb;
    border-radius: 3px;
    display: flex;
    justify-content: space-between;
}
.field-coord {
    width: 122px;
    margin-right: 9px;
}
.st-extent {
    flex: none;
    width: 16px;
    height: 20px;
    margin-right: 9px;
}
.st-label {
    flex: none;
}
.field-scale {
    width: 116px;
    margin: 0 11px;
}
.combo-btn {
    width: 25px;
    border-left: 1px solid #d0cfcc;
    background-color: #f5f4f3;
    display: flex;
    align-items: center;
    justify-content: center;
}
.field-rot {
    width: 106px;
    margin: 0 11px 0 12px;
}
.spin-btn {
    width: 13px;
    background-color: #f5f4f3;
    display: flex;
    flex-direction: column;
    align-items: center;
    justify-content: center;
    gap: 4px;
}
.spin-btn .tri {
    border-left-width: 3px;
    border-right-width: 3px;
    transform: scaleY(.8);
}
.st-check {
    display: flex;
    align-items: center;
    gap: 7px;
}
.check {
    width: 15px;
    height: 15px;
    background-color: #ee7c52;
    border: 1px solid #b15e3e;
    border-radius: 2px;
}
.check svg {
    display: block;
}
.st-crs {
    display: flex;
    align-items: center;
    gap: 4px;
    margin-left: 19px;
}
.st-crs svg {
    width: 16px;
    height: 16px;
}
.st-msg {
    flex: none;
    width: 18px;
    height: 18px;
    margin-left: 21px;
}

/* ventana flotante */
.window {
    position: absolute;
    left: 60px;
    top: 86px;
    width: 533px;
    height: 647px;
    display: flex;
    flex-direction: column;
    background-color: #f2f1f0;
    border-radius: 7px 7px 0 0;
    box-shadow: 0 5px 18px rgba(0, 0, 0, .62);
}
.titlebar {
    flex: none;
    height: 28px;
    padding-left: 7px;
    display: flex;
    align-items: center;
    gap: 4px;
    background: linear-gradient(#54534e, #3c3b37);
    border-radius: 7px 7px 0 0;
}
.wbtn {
    flex: none;
    width: 15px;
    height: 15px;
    border-radius: 50%;
    display: flex;
    align-items: center;
    justify-content: center;
    background: linear-gradient(#8a8981, #5e5d57);
    border: 1px solid #2f2e2b;
    color: #2f2e2b;
    font-size: 11px;
    font-weight: 700;
    line-height: 1;
}
.wbtn-close {
    background: linear-gradient(#f28a5b, #dc4f20);
}
.wbtn-sq {
    width: 7px;
    height: 7px;
    border: 1px solid #2f2e2b;
}
.wtitle {
    margin-left: 9px;
    white-space: nowrap;
    color: #dfdbd2;
    font-weight: 700;
    font-size: 14.350px;
    -webkit-mask-image: linear-gradient(to right, #000 94%, rgba(0, 0, 0, .25));
    mask-image: linear-gradient(to right, #000 94%, rgba(0, 0, 0, .25));
}
.wtools {
    flex: none;
    height: 33px;
    padding-left: 1px;
    display: flex;
    align-items: center;
}
.wtool {
    flex: none;
    width: 26.700px;
    height: 22px;
    display: flex;
    align-items: center;
    justify-content: center;
}
.wtool svg {
    width: 20px;
    height: 20px;
}
.wtool-edit {
    background-color: #f3dcd4;
    width: 21px;
    margin: 0 3px;
}
.wtool-on {
    background-color: #e4e3e1;
    border: 1px solid #b5b4b1;
    border-radius: 3px;
}
.wtool-help {
    font-size: 15px;
    color: #333;
    margin-left: -2px;
}
.wsep {
    flex: none;
    width: 6px;
    height: 24px;
    border-left: 1px solid #c9c8c5;
    margin-left: 2px;
}
.wbody {
    flex: 1;
    min-height: 0;
    display: flex;
    padding-left: 1px;
    border-top: 1px solid #c4c3c0;
    border-bottom: 1px solid #c4c3c0;
}
.table-wrap {
    width: 516px;
    overflow: hidden;
    background-color: #fff;
    border-right: 1px solid #c4c3c0;
}
.attr {
    width: 515px;
    table-layout: fixed;
    border-collapse: separate;
    border-spacing: 0;
}
.attr th, .attr td {
    height: 30px;
    padding: 0 0 0 3px;
    font-weight: 400;
    overflow: hidden;
    white-space: nowrap;
    border-right: 1px solid #c8c7c5;
    border-bottom: 1px solid #c8c7c5;
}
.attr td {
    vertical-align: top;
    line-height: 17px;
}
.attr tbody th {
    padding: 3px 0 0;
    text-align: center;
    background: linear-gradient(#fff, #f2f1f0);
    line-height: 25px;
}
.attr thead th {
    height: 24px;
    padding: 0;
    text-align: center;
    background: linear-gradient(#fbfbfa, #efeeec);
}
.corner {
    width: 34px;
}
.attr th:nth-child(2), .attr th:nth-child(3), .attr th:nth-child(4) {
    width: 100px;
}
.attr .fill {
    border: none;
}
.attr thead .fill {
    background: #f2f1f0;
}
.alt td:not(.fill) {
    background-color: #f0f0ef;
}
.sel td:not(.fill) {
    background-color: #f37a4a;
    color: #fff;
}
.vscroll {
    flex: 1;
    margin: 0 0 1px 3px;
    display: flex;
    flex-direction: column;
    align-items: center;
    background-color: #f8f8f7;
    border: 1px solid #c8c7c5;
    border-radius: 7px;
    padding: 4px 0;
}
.vscroll .tri {
    flex: none;
    border-left-width: 3px;
    border-right-width: 3px;
}
.thumb {
    flex: none;
    width: 13px;
    height: 48px;
    margin-top: 3px;
    background-color: #fcfcfb;
    border: 1px solid #c0bfbc;
    border-radius: 6px;
    display: flex;
    flex-direction: column;
    align-items: center;
    justify-content: center;
    gap: 2px;
}
.thumb b {
    width: 5px;
    height: 1px;
    background-color: #b5b4b1;
}
.track {
    flex: 1;
}
.wfoot {
    flex: none;
    height: 32px;
    padding: 0 4px;
    display: flex;
    align-items: center;
    justify-content: space-between;
}
.filter-btn {
    width: 279px;
    height: 23px;
    display: flex;
    align-items: center;
    gap: 3px;
    padding-left: 4px;
    white-space: nowrap;
    background-color: #f7f6f5;
    border: 1px solid #bfbebb;
    border-radius: 5px;
}
.filter-btn svg {
    width: 16px;
    height: 19px;
}
.filter-btn .tri {
    margin-left: 2px;
    margin-top: 3px;
}
.view-btns {
    display: flex;
    gap: 2px;
}
.view-btn {
    width: 20px;
    height: 21px;
    display: flex;
    align-items: center;
    justify-content: center;
    background-color: #f7f6f5;
    border: 1px solid #c8c7c5;
    border-radius: 4px;
}
.view-btn svg {
    width: 18px;
    height: 18px;
}
.view-btn-on {
    background-color: #dedddb;
}
```
